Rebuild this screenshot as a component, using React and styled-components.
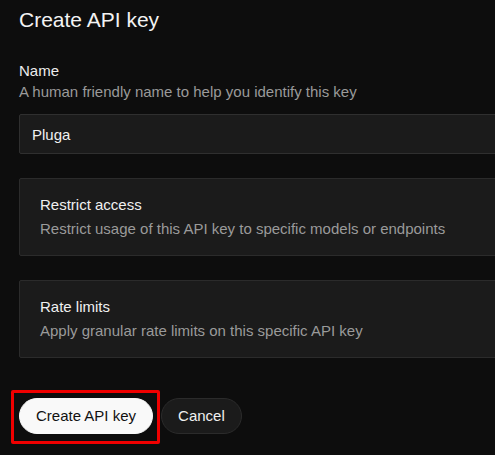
import React from "react";
import styled, { createGlobalStyle } from "styled-components";

const Global = createGlobalStyle`
  html, body {
    margin: 0;
    padding: 0;
    background: #0d0d0d;
  }
  body {
    font-family: "Liberation Sans", Arial, sans-serif;
    color: #ececec;
  }
`;

const Frame = styled.div`
  width: 100vw;
  height: 100vh;
  overflow: hidden;
  background: #0d0d0d;
`;

const Page = styled.div`
  width: 540px;
  padding: 8px 0 0 19px;
  display: flex;
  flex-direction: column;
`;

const Title = styled.h2`
  margin: 0;
  font-size: 21px;
  font-weight: 400;
  line-height: 24px;
  color: #f3f3f3;
`;

const Field = styled.div`
  margin-top: 28px;
  display: flex;
  flex-direction: column;
`;

const Label = styled.div`
  font-size: 15px;
  line-height: 22px;
  color: #ececec;
`;

const Hint = styled.div`
  font-size: 15px;
  line-height: 20px;
  color: #9a9a9a;
`;

const Input = styled.input`
  margin-top: 12px;
  box-sizing: border-box;
  height: 40px;
  width: 100%;
  padding: 0 12px;
  background: #1b1b1b;
  border: 1px solid #2f2f2f;
  border-radius: 2px;
  color: #f0f0f0;
  font-family: "Liberation Sans", Arial, sans-serif;
  font-size: 15px;
  line-height: 20px;
  outline: none;
`;

const Card = styled.div`
  margin-top: 24px;
  box-sizing: border-box;
  height: 78px;
  padding: 16px 20px;
  background: #1b1b1b;
  border: 1px solid #2b2b2b;
  border-radius: 2px;
  display: flex;
  flex-direction: column;
  gap: 4px;
`;

const CardTitle = styled.div`
  font-size: 15px;
  line-height: 20px;
  color: #f0f0f0;
`;

const Actions = styled.div`
  margin-top: 40px;
  display: flex;
  align-items: center;
  gap: 8px;
`;

const Highlight = styled.div`
  position: relative;
  display: flex;
`;

const RedBox = styled.span`
  position: absolute;
  top: -8px;
  left: -8px;
  right: -7px;
  bottom: -10px;
  border: 3px solid #f00000;
  border-radius: 2px;
  pointer-events: none;
`;

const Button = styled.button`
  box-sizing: border-box;
  height: 36px;
  padding: 0 16px;
  border-radius: 18px;
  font-family: "Liberation Sans", Arial, sans-serif;
  font-size: 15px;
  line-height: 20px;
  cursor: pointer;
  background: ${(p) => (p.$primary ? "#f9f9f9" : "#1b1b1b")};
  color: ${(p) => (p.$primary ? "#111111" : "#f0f0f0")};
  border: 1px solid ${(p) => (p.$primary ? "#f9f9f9" : "#2b2b2b")};
`;

const options = [
  {
    title: "Restrict access",
    desc: "Restrict usage of this API key to specific models or endpoints",
  },
  {
    title: "Rate limits",
    desc: "Apply granular rate limits on this specific API key",
  },
];

export default function App() {
  return (
    <>
      <Global />
      <Frame>
        <Page>
          <Title>Create API key</Title>
          <Field>
            <Label>Name</Label>
            <Hint>A human friendly name to help you identify this key</Hint>
            <Input defaultValue="Pluga" />
          </Field>
          {options.map((o) => (
            <Card key={o.title}>
              <CardTitle>{o.title}</CardTitle>
              <Hint>{o.desc}</Hint>
            </Card>
          ))}
          <Actions>
            <Highlight>
              <Button $primary>Create API key</Button>
              <RedBox />
            </Highlight>
            <Button>Cancel</Button>
          </Actions>
        </Page>
      </Frame>
    </>
  );
}
